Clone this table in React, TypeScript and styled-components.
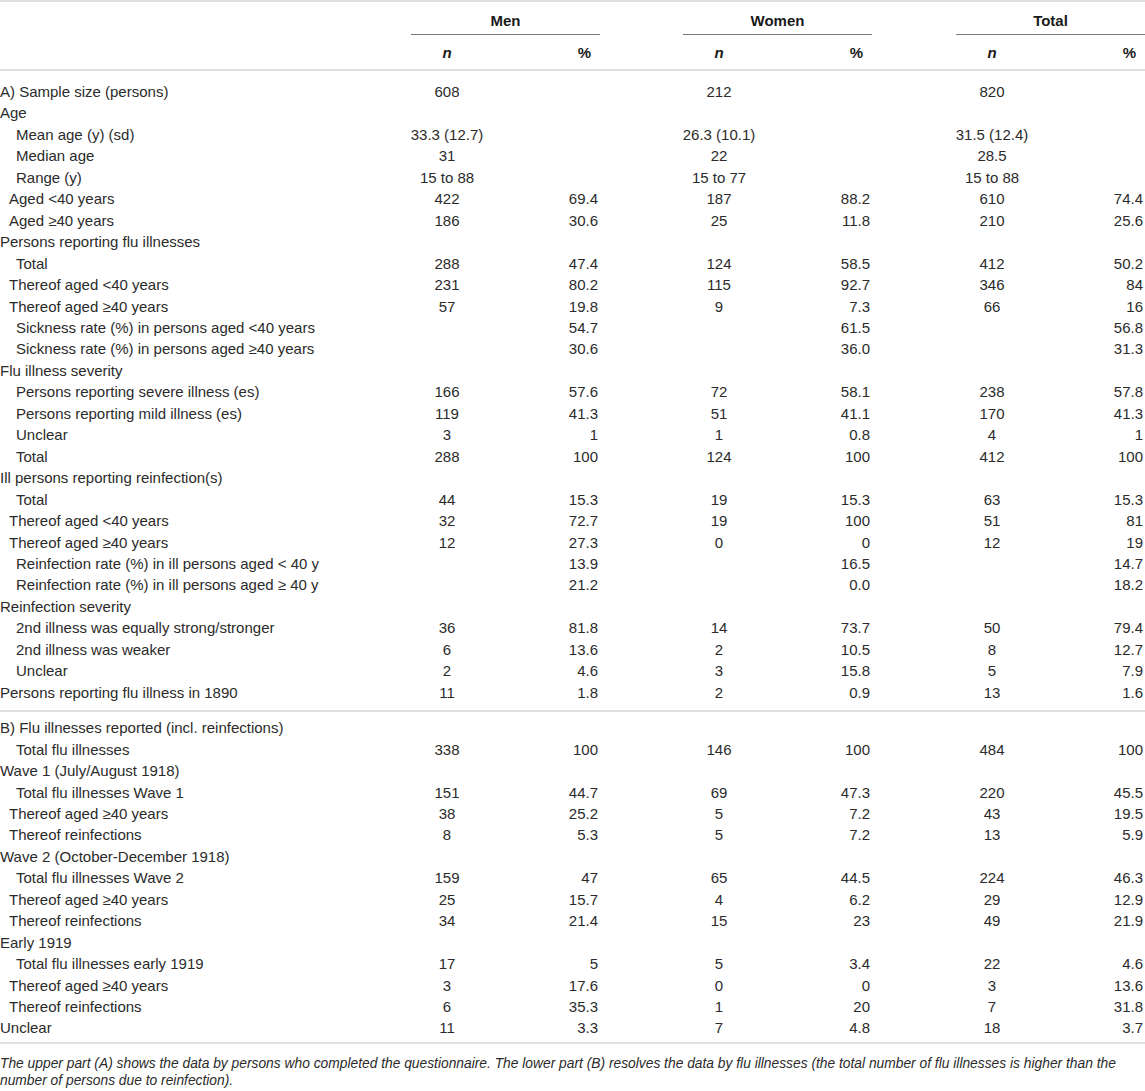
import React from "react";
import styled, { createGlobalStyle } from "styled-components";

const GlobalStyle = createGlobalStyle`
  body {
    margin: 0;
    background: #ffffff;
  }
`;

const COLUMNS = "387px 120px 93px 59px 120px 93px 60px 120px 93px";
const N_COL = [2, 5, 8];
const PCT_COL = [3, 6, 9];

type RowData = [string, number, ...string[]];

const partA: RowData[] = [
  ["A) Sample size (persons)", 0, "608", "", "212", "", "820", ""],
  ["Age", 0],
  ["Mean age (y) (sd)", 16, "33.3 (12.7)", "", "26.3 (10.1)", "", "31.5 (12.4)", ""],
  ["Median age", 16, "31", "", "22", "", "28.5", ""],
  ["Range (y)", 16, "15 to 88", "", "15 to 77", "", "15 to 88", ""],
  ["Aged <40 years", 9, "422", "69.4", "187", "88.2", "610", "74.4"],
  ["Aged ≥40 years", 9, "186", "30.6", "25", "11.8", "210", "25.6"],
  ["Persons reporting flu illnesses", 0],
  ["Total", 16, "288", "47.4", "124", "58.5", "412", "50.2"],
  ["Thereof aged <40 years", 9, "231", "80.2", "115", "92.7", "346", "84"],
  ["Thereof aged ≥40 years", 9, "57", "19.8", "9", "7.3", "66", "16"],
  ["Sickness rate (%) in persons aged <40 years", 16, "", "54.7", "", "61.5", "", "56.8"],
  ["Sickness rate (%) in persons aged ≥40 years", 16, "", "30.6", "", "36.0", "", "31.3"],
  ["Flu illness severity", 0],
  ["Persons reporting severe illness (es)", 16, "166", "57.6", "72", "58.1", "238", "57.8"],
  ["Persons reporting mild illness (es)", 16, "119", "41.3", "51", "41.1", "170", "41.3"],
  ["Unclear", 16, "3", "1", "1", "0.8", "4", "1"],
  ["Total", 16, "288", "100", "124", "100", "412", "100"],
  ["Ill persons reporting reinfection(s)", 0],
  ["Total", 16, "44", "15.3", "19", "15.3", "63", "15.3"],
  ["Thereof aged <40 years", 9, "32", "72.7", "19", "100", "51", "81"],
  ["Thereof aged ≥40 years", 9, "12", "27.3", "0", "0", "12", "19"],
  ["Reinfection rate (%) in ill persons aged < 40 y", 16, "", "13.9", "", "16.5", "", "14.7"],
  ["Reinfection rate (%) in ill persons aged ≥ 40 y", 16, "", "21.2", "", "0.0", "", "18.2"],
  ["Reinfection severity", 0],
  ["2nd illness was equally strong/stronger", 16, "36", "81.8", "14", "73.7", "50", "79.4"],
  ["2nd illness was weaker", 16, "6", "13.6", "2", "10.5", "8", "12.7"],
  ["Unclear", 16, "2", "4.6", "3", "15.8", "5", "7.9"],
  ["Persons reporting flu illness in 1890", 0, "11", "1.8", "2", "0.9", "13", "1.6"],
];

const partB: RowData[] = [
  ["B) Flu illnesses reported (incl. reinfections)", 0],
  ["Total flu illnesses", 16, "338", "100", "146", "100", "484", "100"],
  ["Wave 1 (July/August 1918)", 0],
  ["Total flu illnesses Wave 1", 16, "151", "44.7", "69", "47.3", "220", "45.5"],
  ["Thereof aged ≥40 years", 9, "38", "25.2", "5", "7.2", "43", "19.5"],
  ["Thereof reinfections", 9, "8", "5.3", "5", "7.2", "13", "5.9"],
  ["Wave 2 (October-December 1918)", 0],
  ["Total flu illnesses Wave 2", 16, "159", "47", "65", "44.5", "224", "46.3"],
  ["Thereof aged ≥40 years", 9, "25", "15.7", "4", "6.2", "29", "12.9"],
  ["Thereof reinfections", 9, "34", "21.4", "15", "23", "49", "21.9"],
  ["Early 1919", 0],
  ["Total flu illnesses early 1919", 16, "17", "5", "5", "3.4", "22", "4.6"],
  ["Thereof aged ≥40 years", 9, "3", "17.6", "0", "0", "3", "13.6"],
  ["Thereof reinfections", 9, "6", "35.3", "1", "20", "7", "31.8"],
  ["Unclear", 0, "11", "3.3", "7", "4.8", "18", "3.7"],
];

const Page = styled.div`
  width: 1145px;
  font-family: "Liberation Sans", Arial, sans-serif;
  color: #2b2b2b;
`;

const Table = styled.div`
  border-top: 2px solid #e0e0e0;
`;

const HeadRow = styled.div<{ $last?: boolean }>`
  display: grid;
  grid-template-columns: ${COLUMNS};
  border-bottom: ${(p) => (p.$last ? "2px solid #e0e0e0" : "none")};
`;

const GroupHead = styled.div<{ $col: number }>`
  grid-column: ${(p) => `${p.$col} / span 2`};
  margin-left: 24px;
  padding: 10px 0 4px;
  border-bottom: 1px solid #7a7a7a;
  text-align: center;
  font-weight: bold;
  font-size: 15px;
  line-height: 18px;
  color: #1a1a1a;
`;

const SubHead = styled.div<{ $col: number; $pct?: boolean }>`
  grid-column: ${(p) => p.$col};
  padding: 9px ${(p) => (p.$pct ? "9px" : "0")} 7px 0;
  text-align: ${(p) => (p.$pct ? "right" : "center")};
  font-weight: bold;
  font-style: ${(p) => (p.$pct ? "normal" : "italic")};
  font-size: 15px;
  line-height: 18px;
  color: #1a1a1a;
`;

const Section = styled.div<{ $top: number; $bottom: number }>`
  padding: ${(p) => `${p.$top}px 0 ${p.$bottom}px`};
  border-bottom: 2px solid #e0e0e0;
`;

const Row = styled.div`
  display: grid;
  grid-template-columns: ${COLUMNS};
  font-size: 15px;
  line-height: 21.46px;
  height: 21.46px;
  white-space: nowrap;
`;

const Label = styled.div<{ $indent: number }>`
  grid-column: 1;
  padding-left: ${(p) => p.$indent}px;
`;

const NCell = styled.div<{ $col: number }>`
  grid-column: ${(p) => p.$col};
  text-align: center;
`;

const PctCell = styled.div<{ $col: number }>`
  grid-column: ${(p) => p.$col};
  text-align: right;
  padding-right: 2px;
`;

const Footnote = styled.p`
  margin: 11px 0 0;
  font-style: italic;
  font-size: 13.8px;
  line-height: 17px;
  color: #2b2b2b;
`;

const DataRow = ({ row }: { row: RowData }) => {
  const [label, indent, ...values] = row;
  return (
    <Row>
      <Label $indent={indent}>{label}</Label>
      {[0, 1, 2].map((g) => (
        <React.Fragment key={g}>
          <NCell $col={N_COL[g]}>{values[g * 2] ?? ""}</NCell>
          <PctCell $col={PCT_COL[g]}>{values[g * 2 + 1] ?? ""}</PctCell>
        </React.Fragment>
      ))}
    </Row>
  );
};

const groups = ["Men", "Women", "Total"];

export default function App() {
  return (
    <Page>
      <GlobalStyle />
      <Table>
        <HeadRow>
          {groups.map((g, i) => (
            <GroupHead key={g} $col={N_COL[i]}>
              {g}
            </GroupHead>
          ))}
        </HeadRow>
        <HeadRow $last>
          {groups.map((g, i) => (
            <React.Fragment key={g}>
              <SubHead $col={N_COL[i]}>n</SubHead>
              <SubHead $col={PCT_COL[i]} $pct>
                %
              </SubHead>
            </React.Fragment>
          ))}
        </HeadRow>
        <Section $top={10} $bottom={7}>
          {partA.map((r, i) => (
            <DataRow key={i} row={r} />
          ))}
        </Section>
        <Section $top={5} $bottom={3}>
          {partB.map((r, i) => (
            <DataRow key={i} row={r} />
          ))}
        </Section>
      </Table>
      <Footnote>
        The upper part (A) shows the data by persons who completed the questionnaire. The lower
        part (B) resolves the data by flu illnesses (the total number of flu illnesses is higher
        than the number of persons due to reinfection).
      </Footnote>
    </Page>
  );
}
